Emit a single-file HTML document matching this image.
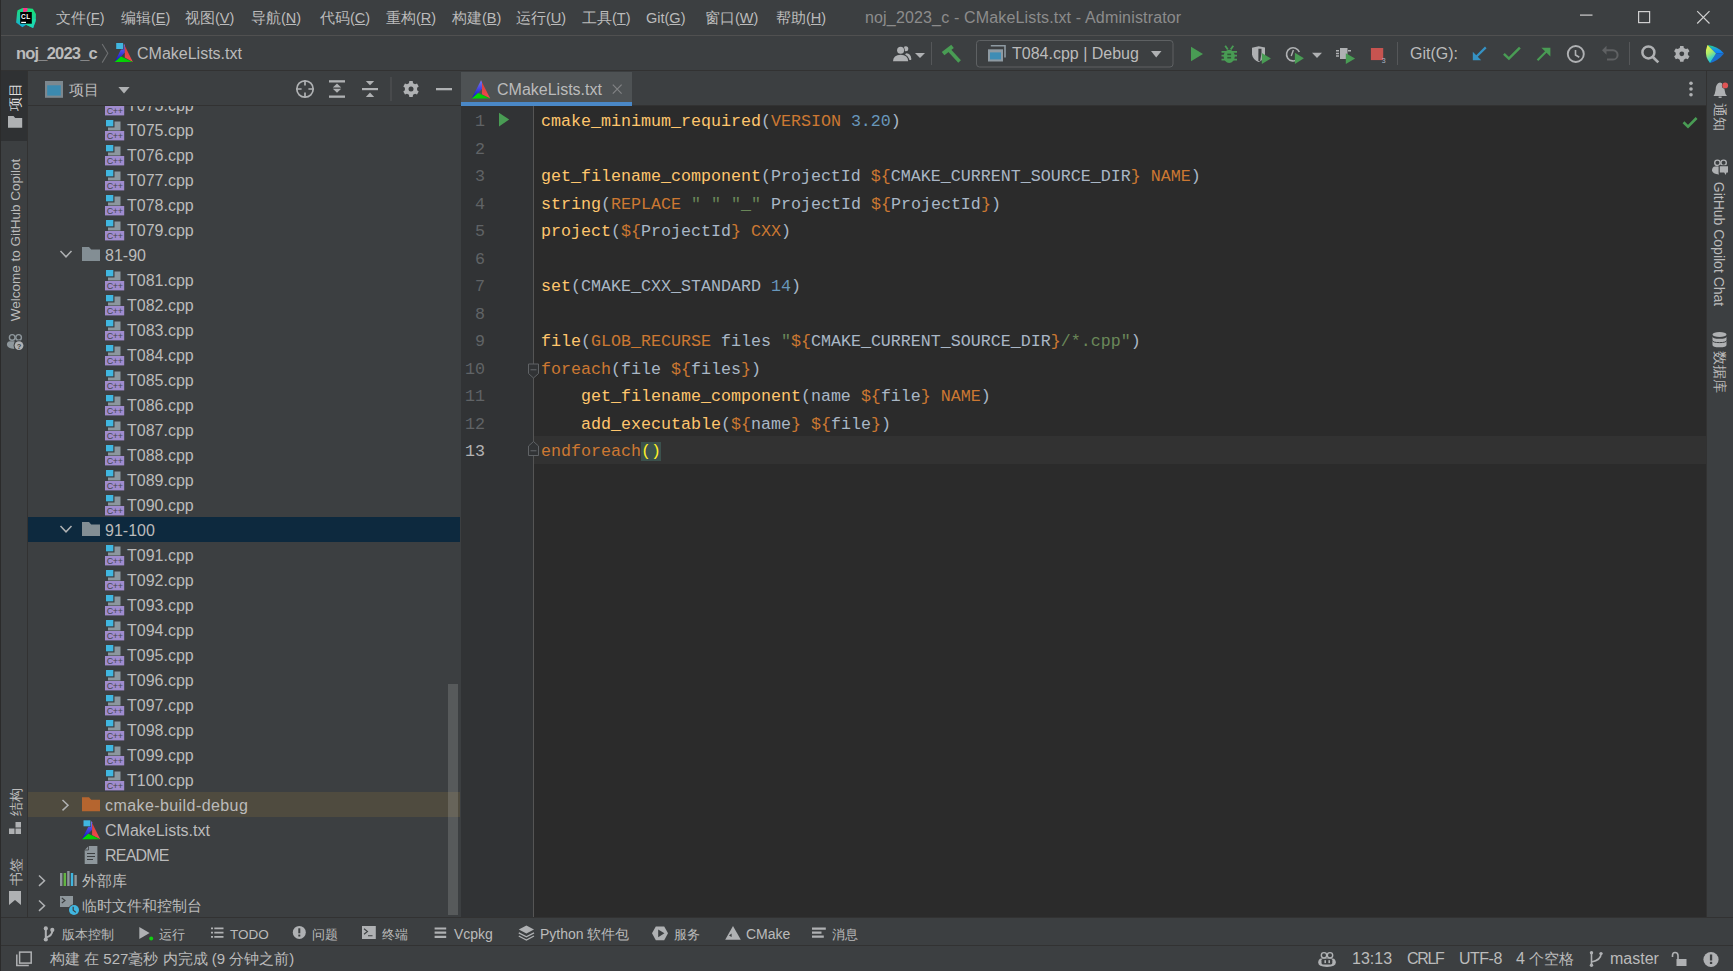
<!DOCTYPE html><html><head><meta charset="utf-8"><style>
*{margin:0;padding:0;box-sizing:border-box}
html,body{width:1733px;height:971px;overflow:hidden;background:#3c3f41}
body{font-family:"Liberation Sans",sans-serif;color:#bbbbbb;position:relative}
.a{position:absolute}
.t{position:absolute;white-space:nowrap;line-height:1}
svg.i{position:absolute;overflow:visible}
.menu{font-size:14.5px;color:#bbbbbb;top:11px}
.rt{position:absolute;font-size:16px;line-height:1;color:#bbbbbb;white-space:nowrap}
.cj{font-size:15px}
.ln{position:absolute;font-family:"Liberation Mono",monospace;font-size:16.667px;color:#606366;text-align:right;width:40px;left:445px;line-height:27.5px;height:27.5px}
.cl{position:absolute;left:541px;font-family:"Liberation Mono",monospace;font-size:16.667px;line-height:27.5px;height:27.5px;white-space:pre;color:#a9b7c6}
.y{color:#ffc66d}.o{color:#cc7832}.n{color:#6897bb}.s{color:#6a8759}
.bt{position:absolute;white-space:nowrap;line-height:1;font-size:14px;top:927px;color:#bbbbbb}
.st{position:absolute;white-space:nowrap;line-height:1;font-size:15px;top:951px;color:#bbbbbb}
</style></head><body><div class="a" style="left:0px;top:0px;width:1733px;height:35px;background:#3c3f41;"></div>
<div class="a" style="left:0px;top:35px;width:1733px;height:1px;background:#505050;"></div>
<div class="a" style="left:0px;top:36px;width:1733px;height:34px;background:#3c3f41;"></div>
<div class="a" style="left:0px;top:70px;width:1733px;height:1px;background:#323232;"></div>
<div class="a" style="left:0px;top:71px;width:27px;height:846px;background:#3c3f41;"></div>
<div class="a" style="left:27px;top:71px;width:1px;height:846px;background:#323232;"></div>
<div class="a" style="left:1px;top:71px;width:26px;height:70px;background:#2f3133;"></div>
<div class="a" style="left:28px;top:71px;width:433px;height:846px;background:#3c3f41;"></div>
<div class="a" style="left:461px;top:71px;width:1245px;height:34px;background:#3c3f41;"></div>
<div class="a" style="left:461px;top:105px;width:1245px;height:1px;background:#323232;"></div>
<div class="a" style="left:461px;top:106px;width:72px;height:811px;background:#313335;"></div>
<div class="a" style="left:533px;top:106px;width:1px;height:811px;background:#555555;"></div>
<div class="a" style="left:534px;top:106px;width:1172px;height:811px;background:#2b2b2b;"></div>
<div class="a" style="left:1706px;top:71px;width:1px;height:846px;background:#323232;"></div>
<div class="a" style="left:1707px;top:71px;width:26px;height:846px;background:#3c3f41;"></div>
<div class="a" style="left:0px;top:917px;width:1733px;height:1px;background:#323232;"></div>
<div class="a" style="left:0px;top:918px;width:1733px;height:27px;background:#3c3f41;"></div>
<div class="a" style="left:0px;top:945px;width:1733px;height:1px;background:#323232;"></div>
<div class="a" style="left:0px;top:946px;width:1733px;height:25px;background:#3c3f41;"></div>
<div class="a" style="left:0px;top:0px;width:1px;height:971px;background:#2b2b2b;"></div>
<div class="t menu" style="left:56px">文件(<u>F</u>)</div>
<div class="t menu" style="left:121px">编辑(<u>E</u>)</div>
<div class="t menu" style="left:185px">视图(<u>V</u>)</div>
<div class="t menu" style="left:251px">导航(<u>N</u>)</div>
<div class="t menu" style="left:320px">代码(<u>C</u>)</div>
<div class="t menu" style="left:386px">重构(<u>R</u>)</div>
<div class="t menu" style="left:452px">构建(<u>B</u>)</div>
<div class="t menu" style="left:516px">运行(<u>U</u>)</div>
<div class="t menu" style="left:582px">工具(<u>T</u>)</div>
<div class="t menu" style="left:646px">Git(<u>G</u>)</div>
<div class="t menu" style="left:705px">窗口(<u>W</u>)</div>
<div class="t menu" style="left:776px">帮助(<u>H</u>)</div>
<div class="t" style="left:865px;top:10px;font-size:16px;color:#8c8c8c;letter-spacing:0.16px">noj_2023_c - CMakeLists.txt - Administrator</div>
<div class="t" style="left:16px;top:45px;font-size:16.5px;color:#bbbbbb;font-weight:bold;letter-spacing:-0.8px">noj_2023_c</div>
<div class="t" style="left:137px;top:46px;font-size:16px;color:#bbbbbb;">CMakeLists.txt</div>
<div class="t" style="left:1012px;top:46px;font-size:16px;color:#bbbbbb;">T084.cpp | Debug</div>
<div class="t" style="left:1410px;top:46px;font-size:16px;color:#bbbbbb;">Git(G):</div>
<div class="a" style="left:28px;top:105px;width:433px;height:1px;background:#323232;"></div>
<div class="t" style="left:69px;top:82px;font-size:15px;color:#bbbbbb;">项目</div>
<div class="a" style="left:461px;top:72px;width:171px;height:30px;background:#4e5254;"></div>
<div class="a" style="left:461px;top:102px;width:171px;height:4px;background:#4a88c7;"></div>
<div class="t" style="left:497px;top:82px;font-size:16px;color:#bbbbbb;">CMakeLists.txt</div>
<div class="a" style="left:28px;top:517px;width:432px;height:25px;background:#0d293e;"></div>
<div class="a" style="left:28px;top:792px;width:432px;height:25px;background:#4f4b3f;"></div>
<div class="a" style="left:28px;top:106px;width:433px;height:811px;overflow:hidden">
<div class="rt" style="left:99px;top:-8px;font-size:16px;color:#bbbbbb;">T073.cpp</div>
<div class="rt" style="left:99px;top:17px;font-size:16px;color:#bbbbbb;">T075.cpp</div>
<div class="rt" style="left:99px;top:42px;font-size:16px;color:#bbbbbb;">T076.cpp</div>
<div class="rt" style="left:99px;top:67px;font-size:16px;color:#bbbbbb;">T077.cpp</div>
<div class="rt" style="left:99px;top:92px;font-size:16px;color:#bbbbbb;">T078.cpp</div>
<div class="rt" style="left:99px;top:117px;font-size:16px;color:#bbbbbb;">T079.cpp</div>
<div class="rt" style="left:77px;top:142px;font-size:16px;color:#bbbbbb;">81-90</div>
<div class="rt" style="left:99px;top:167px;font-size:16px;color:#bbbbbb;">T081.cpp</div>
<div class="rt" style="left:99px;top:192px;font-size:16px;color:#bbbbbb;">T082.cpp</div>
<div class="rt" style="left:99px;top:217px;font-size:16px;color:#bbbbbb;">T083.cpp</div>
<div class="rt" style="left:99px;top:242px;font-size:16px;color:#bbbbbb;">T084.cpp</div>
<div class="rt" style="left:99px;top:267px;font-size:16px;color:#bbbbbb;">T085.cpp</div>
<div class="rt" style="left:99px;top:292px;font-size:16px;color:#bbbbbb;">T086.cpp</div>
<div class="rt" style="left:99px;top:317px;font-size:16px;color:#bbbbbb;">T087.cpp</div>
<div class="rt" style="left:99px;top:342px;font-size:16px;color:#bbbbbb;">T088.cpp</div>
<div class="rt" style="left:99px;top:367px;font-size:16px;color:#bbbbbb;">T089.cpp</div>
<div class="rt" style="left:99px;top:392px;font-size:16px;color:#bbbbbb;">T090.cpp</div>
<div class="rt" style="left:77px;top:417px;font-size:16px;color:#bbbbbb;">91-100</div>
<div class="rt" style="left:99px;top:442px;font-size:16px;color:#bbbbbb;">T091.cpp</div>
<div class="rt" style="left:99px;top:467px;font-size:16px;color:#bbbbbb;">T092.cpp</div>
<div class="rt" style="left:99px;top:492px;font-size:16px;color:#bbbbbb;">T093.cpp</div>
<div class="rt" style="left:99px;top:517px;font-size:16px;color:#bbbbbb;">T094.cpp</div>
<div class="rt" style="left:99px;top:542px;font-size:16px;color:#bbbbbb;">T095.cpp</div>
<div class="rt" style="left:99px;top:567px;font-size:16px;color:#bbbbbb;">T096.cpp</div>
<div class="rt" style="left:99px;top:592px;font-size:16px;color:#bbbbbb;">T097.cpp</div>
<div class="rt" style="left:99px;top:617px;font-size:16px;color:#bbbbbb;">T098.cpp</div>
<div class="rt" style="left:99px;top:642px;font-size:16px;color:#bbbbbb;">T099.cpp</div>
<div class="rt" style="left:99px;top:667px;font-size:16px;color:#bbbbbb;">T100.cpp</div>
</div>
<div class="rt" style="left:105px;top:798px;font-size:16px;color:#bbbbbb;letter-spacing:0.42px">cmake-build-debug</div>
<div class="rt" style="left:105px;top:823px;font-size:16px;color:#bbbbbb;">CMakeLists.txt</div>
<div class="rt" style="left:105px;top:848px;font-size:16px;color:#bbbbbb;letter-spacing:-0.8px">README</div>
<div class="rt" style="left:82px;top:873px;font-size:15px;color:#bbbbbb;">外部库</div>
<div class="rt" style="left:82px;top:898px;font-size:15px;color:#bbbbbb;">临时文件和控制台</div>
<div class="t" style="left:16px;top:97px;font-size:13.5px;color:#dddddd;transform:translate(-50%,-50%) rotate(-90deg);">项目</div>
<div class="t" style="left:16px;top:240px;font-size:13.5px;color:#bbbbbb;transform:translate(-50%,-50%) rotate(-90deg);">Welcome to GitHub Copilot</div>
<div class="t" style="left:16.5px;top:802px;font-size:13.5px;color:#bbbbbb;transform:translate(-50%,-50%) rotate(-90deg);">结构</div>
<div class="t" style="left:16.5px;top:872px;font-size:13.5px;color:#bbbbbb;transform:translate(-50%,-50%) rotate(-90deg);">书签</div>
<div class="t" style="left:1718.5px;top:117px;font-size:13.5px;color:#bbbbbb;transform:translate(-50%,-50%) rotate(90deg);">通知</div>
<div class="t" style="left:1719px;top:243.5px;font-size:14px;color:#bbbbbb;transform:translate(-50%,-50%) rotate(90deg);">GitHub Copilot Chat</div>
<div class="t" style="left:1719px;top:372px;font-size:13.5px;color:#bbbbbb;transform:translate(-50%,-50%) rotate(90deg);">数据库</div>
<div class="a" style="left:534px;top:436px;width:1172px;height:28px;background:#323232;"></div>
<div class="ln" style="top:108.0px;color:#606366">1</div>
<div class="cl" style="top:108.0px"><span class="y">cmake_minimum_required</span>(<span class="o">VERSION</span> <span class="n">3.20</span>)</div>
<div class="ln" style="top:135.5px;color:#606366">2</div>
<div class="cl" style="top:135.5px"></div>
<div class="ln" style="top:163.0px;color:#606366">3</div>
<div class="cl" style="top:163.0px"><span class="y">get_filename_component</span>(ProjectId <span class="o">${</span>CMAKE_CURRENT_SOURCE_DIR<span class="o">}</span> <span class="o">NAME</span>)</div>
<div class="ln" style="top:190.5px;color:#606366">4</div>
<div class="cl" style="top:190.5px"><span class="y">string</span>(<span class="o">REPLACE</span> <span class="s">" "</span> <span class="s">"_"</span> ProjectId <span class="o">${</span>ProjectId<span class="o">}</span>)</div>
<div class="ln" style="top:218.0px;color:#606366">5</div>
<div class="cl" style="top:218.0px"><span class="y">project</span>(<span class="o">${</span>ProjectId<span class="o">}</span> <span class="o">CXX</span>)</div>
<div class="ln" style="top:245.5px;color:#606366">6</div>
<div class="cl" style="top:245.5px"></div>
<div class="ln" style="top:273.0px;color:#606366">7</div>
<div class="cl" style="top:273.0px"><span class="y">set</span>(CMAKE_CXX_STANDARD <span class="n">14</span>)</div>
<div class="ln" style="top:300.5px;color:#606366">8</div>
<div class="cl" style="top:300.5px"></div>
<div class="ln" style="top:328.0px;color:#606366">9</div>
<div class="cl" style="top:328.0px"><span class="y">file</span>(<span class="o">GLOB_RECURSE</span> files <span class="s">"</span><span class="o">${</span>CMAKE_CURRENT_SOURCE_DIR<span class="o">}</span><span class="s">/*.cpp"</span>)</div>
<div class="ln" style="top:355.5px;color:#606366">10</div>
<div class="cl" style="top:355.5px"><span class="o">foreach</span>(file <span class="o">${</span>files<span class="o">}</span>)</div>
<div class="ln" style="top:383.0px;color:#606366">11</div>
<div class="cl" style="top:383.0px">    <span class="y">get_filename_component</span>(name <span class="o">${</span>file<span class="o">}</span> <span class="o">NAME</span>)</div>
<div class="ln" style="top:410.5px;color:#606366">12</div>
<div class="cl" style="top:410.5px">    <span class="y">add_executable</span>(<span class="o">${</span>name<span class="o">}</span> <span class="o">${</span>file<span class="o">}</span>)</div>
<div class="ln" style="top:438.0px;color:#b4b4b4">13</div>
<div class="cl" style="top:438.0px"><span class="o">endforeach</span><span style="color:#ffef28;background:#3b514d">()</span></div>
<div class="bt" style="left:62px"><span style="font-size:13px">版本控制</span></div>
<div class="bt" style="left:159px"><span style="font-size:13px">运行</span></div>
<div class="bt" style="left:230px"><span style="font-size:13.5px">TODO</span></div>
<div class="bt" style="left:312px"><span style="font-size:13px">问题</span></div>
<div class="bt" style="left:382px"><span style="font-size:13px">终端</span></div>
<div class="bt" style="left:454px">Vcpkg</div>
<div class="bt" style="left:540px">Python <span style="font-size:13.5px">软件包</span></div>
<div class="bt" style="left:674px"><span style="font-size:13px">服务</span></div>
<div class="bt" style="left:746px">CMake</div>
<div class="bt" style="left:832px"><span style="font-size:13.3px">消息</span></div>
<div class="st" style="left:50px">构建 在 527毫秒 内完成 (9 分钟之前)</div>
<div class="st" style="left:1352px;font-size:16px;top:950.5px">13:13</div>
<div class="st" style="left:1407px;font-size:16px;top:950.5px"><span style="letter-spacing:-1.3px">CRLF</span></div>
<div class="st" style="left:1459px;font-size:16px;top:950.5px"><span style="letter-spacing:-0.5px">UTF-8</span></div>
<div class="st" style="left:1516px;font-size:16px;top:950.5px">4 <span style="font-size:15px">个空格</span></div>
<div class="st" style="left:1610px;font-size:16px;top:950.5px">master</div>
<div class="a" style="left:448px;top:684px;width:10px;height:231px;background:rgba(255,255,255,0.14);"></div><svg class="i" style="left:0;top:0" width="1733" height="971" viewBox="0 0 1733 971">
<defs>
<linearGradient id="cmB" x1="0" y1="0" x2="0" y2="1"><stop offset="0" stop-color="#7a7af0"/><stop offset="1" stop-color="#0a0ac8"/></linearGradient>
<linearGradient id="cmR" x1="0" y1="0" x2="0" y2="1"><stop offset="0" stop-color="#d03a3a"/><stop offset="1" stop-color="#f44c4c"/></linearGradient>
<linearGradient id="cmG" x1="0" y1="0" x2="1" y2="0"><stop offset="0" stop-color="#00e000"/><stop offset="1" stop-color="#08c008"/></linearGradient>
<linearGradient id="clg" x1="0.2" y1="0" x2="0" y2="1"><stop offset="0" stop-color="#16e07a"/><stop offset="0.55" stop-color="#1fc8a8"/><stop offset="1" stop-color="#0aa0ec"/></linearGradient><linearGradient id="clg2" x1="0" y1="0" x2="1" y2="1"><stop offset="0" stop-color="#14e882"/><stop offset="1" stop-color="#20d0c8"/></linearGradient>
<linearGradient id="lgY" x1="0" y1="0" x2="0.4" y2="1"><stop offset="0" stop-color="#fcf84a"/><stop offset="0.5" stop-color="#a7eb6c"/><stop offset="1" stop-color="#07c3f2"/></linearGradient>
<linearGradient id="lgB" x1="0" y1="0" x2="0" y2="1"><stop offset="0" stop-color="#21d789"/><stop offset="0.5" stop-color="#1a9ae0"/><stop offset="1" stop-color="#087cfa"/></linearGradient>
</defs>
<polygon points="17.6,10.2 22.7,8 27.3,8.3 32.8,8.8 35.9,14.1 35.8,21.3 33.1,27.9 26.1,24.8 22.4,27.3 16.1,22.4 17.1,12.6" fill="url(#clg)"/>
<polygon points="33.1,27.9 26.1,24.8 27,20 35.8,19" fill="url(#clg2)"/>
<polygon points="23,8.1 27.4,8.1 27.6,11 24.5,12.2 23.2,12" fill="#fc318c"/>
<rect x="20.2" y="12" width="11.6" height="11.7" fill="#000"/>
<text x="21.1" y="18.5" font-family="Liberation Sans" font-weight="bold" font-size="6.6" fill="#fff" letter-spacing="0.4">CL</text>
<rect x="21.2" y="21.8" width="4.8" height="1.2" fill="#fff"/>
<rect x="1580" y="14.5" width="12.5" height="1.2" fill="#cfcfcf"/>
<rect x="1638.6" y="11.6" width="11" height="11" fill="none" stroke="#cfcfcf" stroke-width="1.2"/>
<path d="M1697.2,11.2 L1709.5,23.5 M1709.5,11.2 L1697.2,23.5" stroke="#cfcfcf" stroke-width="1.2"/>
<path d="M102.2,44 L107.8,53.2 L102.2,62.6" fill="none" stroke="#6e7072" stroke-width="1.1"/>
<polygon points="123.80,43.70 124.80,45.00 124.80,52.40 121.00,56.40 114.70,61.90" fill="url(#cmB)"/><polygon points="123.80,43.70 132.90,61.90 124.80,57.60 124.80,45.00" fill="url(#cmR)"/><polygon points="114.70,61.90 121.00,56.40 132.90,61.90" fill="url(#cmG)"/><rect x="115.70" y="42.50" width="8.00" height="7.00" fill="#3c3f41"/><rect x="116.20" y="43.00" width="6.90" height="6.00" fill="#40b6e0"/>
<circle cx="905.8" cy="48.8" r="2.5" fill="#afb1b3"/><path d="M904,60 Q904.5,53.6 906.5,53.2 Q910.8,53.8 911.2,58.2 L911.2,60 Z" fill="#afb1b3"/>
<circle cx="900.6" cy="50.2" r="4.3" fill="#3c3f41"/><path d="M891.8,62.2 Q892,54 900.6,53.4 Q909.5,54 909.6,62.2 Z" fill="#3c3f41"/>
<circle cx="900.6" cy="50.2" r="3.5" fill="#afb1b3"/><path d="M893,61.2 Q893.2,55 900.6,54.7 Q908,55 908.2,61.2 Z" fill="#afb1b3"/>
<polygon points="915,53 925,53 920,58" fill="#afb1b3"/>
<rect x="931" y="42" width="1" height="23" fill="#555759"/>
<g transform="rotate(-38 947.8 50)"><rect x="941.8" y="47.9" width="12" height="4.2" fill="#499c54"/></g>
<line x1="949.5" y1="50.6" x2="959.6" y2="61.4" stroke="#499c54" stroke-width="3.6"/>
<rect x="976.5" y="40.5" width="196.5" height="26.5" rx="3" fill="none" stroke="#5e6163" stroke-width="1"/>
<path d="M990.8,45.8 H1005 V57.5" fill="none" stroke="#8e9aa2" stroke-width="1.6"/>
<rect x="988" y="49.3" width="15" height="12.2" fill="#8e9aa2"/><rect x="990" y="52.4" width="11" height="7" fill="#3e8db5"/>
<polygon points="1151,51 1161.5,51 1156.2,57.5" fill="#afb1b3"/>
<polygon points="1191,46.8 1191,61.3 1203,54" fill="#499c54"/>
<ellipse cx="1229.2" cy="56.3" rx="5.6" ry="6.6" fill="#499c54"/>
<path d="M1221.5,51.8 H1237 M1221.5,55.6 H1237 M1221.5,59.6 H1237" stroke="#499c54" stroke-width="1.8"/>
<path d="M1225.2,45.8 L1227.8,49.6 M1233.3,45.8 L1230.7,49.6" stroke="#499c54" stroke-width="1.8"/>
<rect x="1227.3" y="53.6" width="3.8" height="1.6" fill="#2f5a35"/><rect x="1227.3" y="56.9" width="3.8" height="1.6" fill="#2f5a35"/>
<path d="M1252,47.8 L1258.6,46.2 L1265,47.6 V54.5 Q1264.2,60 1258.6,62 Q1253,60 1252,54.5 Z" fill="#afb1b3"/>
<path d="M1258.4,48.8 H1261.5 V53 L1260.2,61 H1258.4 Z" fill="#3c3f41"/>
<polygon points="1261.8,53 1261.8,63.9 1270.9,58.4" fill="#499c54"/>
<path d="M1297.6,59.2 A6.6,6.6 0 1 1 1299.3,52" fill="none" stroke="#afb1b3" stroke-width="1.6"/>
<path d="M1293.4,50 L1291.2,56" stroke="#afb1b3" stroke-width="1.4"/>
<polygon points="1294.9,52.8 1294.9,63.9 1303.9,58.3" fill="#499c54"/>
<polygon points="1312,52.8 1322,52.8 1317,58" fill="#afb1b3"/>
<rect x="1340" y="48" width="7.5" height="11" fill="#afb1b3"/>
<path d="M1336,50.8 H1339 M1336,53.5 H1339 M1336,56 H1339 M1348,50.8 H1351" stroke="#afb1b3" stroke-width="1.6"/>
<polygon points="1345.8,53.2 1345.8,63.9 1355.1,58.5" fill="#499c54"/>
<rect x="1370.9" y="48" width="12.3" height="12.1" fill="#c75450"/>
<text x="1381.8" y="63.2" font-family="Liberation Sans" font-size="7" fill="#a9b7c6">3</text>
<rect x="1397" y="42" width="1" height="23" fill="#555759"/>
<path d="M1485.8,47.4 L1475.5,57.5" stroke="#3592c4" stroke-width="2.2"/>
<polygon points="1472.8,51.8 1472.8,60.2 1481.2,60.2" fill="#3592c4"/>
<path d="M1503.9,53.8 L1508.9,58.6 L1519.9,47.6" fill="none" stroke="#499c54" stroke-width="2.5"/>
<path d="M1537.5,60.3 L1547,50.8" stroke="#499c54" stroke-width="2.2"/>
<polygon points="1541.4,47.8 1550.4,47.8 1550.4,56.4" fill="#499c54"/>
<circle cx="1575.8" cy="54" r="8" fill="none" stroke="#afb1b3" stroke-width="1.9"/>
<path d="M1575.5,50 V55 L1579.3,57.2" fill="none" stroke="#afb1b3" stroke-width="1.6"/>
<polygon points="1602,50.3 1606.5,45.8 1606.5,54.8" fill="#5f6163"/>
<path d="M1605.5,50.3 H1613 A4.6,4.6 0 0 1 1613,59.5 H1607" fill="none" stroke="#5f6163" stroke-width="2"/>
<rect x="1629" y="42" width="1" height="23" fill="#555759"/>
<circle cx="1648.4" cy="52.4" r="6" fill="none" stroke="#afb1b3" stroke-width="2.5"/>
<path d="M1652.6,56.8 L1658.3,62.4" stroke="#afb1b3" stroke-width="2.7"/>
<path d="M1680.12,45.88 L1683.48,45.88 L1683.84,47.94 L1685.85,49.11 L1687.82,48.38 L1689.50,51.30 L1687.89,52.64 L1687.89,54.96 L1689.50,56.30 L1687.82,59.22 L1685.85,58.49 L1683.84,59.66 L1683.48,61.72 L1680.12,61.72 L1679.76,59.66 L1677.75,58.49 L1675.78,59.22 L1674.10,56.30 L1675.71,54.96 L1675.71,52.64 L1674.10,51.30 L1675.78,48.38 L1677.75,49.11 L1679.76,47.94Z" fill="#afb1b3"/><circle cx="1681.8" cy="53.8" r="2.4" fill="#3c3f41"/>
<path d="M1707.5,45 Q1718,46 1724,53.5 L1716,53.5 Z" fill="url(#lgB)"/>
<path d="M1716,53.5 H1724 Q1718,61 1710,63 Z" fill="#1a6fd0"/>
<path d="M1707.5,45 L1716,53.5 L1710,63 Q1705,57 1706,50 Z" fill="url(#lgY)"/>
<polygon points="480.99,80.21 482.00,81.52 482.00,88.99 478.16,93.03 471.80,98.59" fill="url(#cmB)"/><polygon points="480.99,80.21 490.18,98.59 482.00,94.25 482.00,81.52" fill="url(#cmR)"/><polygon points="471.80,98.59 478.16,93.03 490.18,98.59" fill="url(#cmG)"/>
<path d="M612.8,84.6 L621.6,93.6 M621.6,84.6 L612.8,93.6" stroke="#808284" stroke-width="1.2"/>
<rect x="45" y="81" width="18" height="16.8" fill="#7d888f"/><rect x="47.2" y="85.3" width="13.6" height="10.3" fill="#3b8ab0"/>
<polygon points="118.4,87 129.6,87 124,93.5" fill="#afb1b3"/>
<circle cx="305" cy="89" r="8.2" fill="none" stroke="#afb1b3" stroke-width="1.7"/>
<path d="M305,80.5 V85.6 M305,92.4 V97.5 M296.5,89 H301.6 M308.4,89 H313.5" stroke="#afb1b3" stroke-width="1.7"/>
<rect x="329" y="80.2" width="16" height="2.3" fill="#afb1b3"/><rect x="329" y="95.5" width="16" height="2.3" fill="#afb1b3"/>
<polygon points="332.8,87.6 341.2,87.6 337,83.6" fill="#afb1b3"/><polygon points="332.8,88.8 341.2,88.8 337,92.8" fill="#afb1b3"/>
<polygon points="365.8,81 374.2,81 370,85.2" fill="#afb1b3"/><rect x="362" y="88" width="16" height="2.2" fill="#afb1b3"/><polygon points="365.8,97 374.2,97 370,92.6" fill="#afb1b3"/>
<rect x="390.5" y="77" width="1" height="24" fill="#555759"/>
<path d="M409.32,81.08 L412.68,81.08 L413.04,83.14 L415.05,84.31 L417.02,83.58 L418.70,86.50 L417.09,87.84 L417.09,90.16 L418.70,91.50 L417.02,94.42 L415.05,93.69 L413.04,94.86 L412.68,96.92 L409.32,96.92 L408.96,94.86 L406.95,93.69 L404.98,94.42 L403.30,91.50 L404.91,90.16 L404.91,87.84 L403.30,86.50 L404.98,83.58 L406.95,84.31 L408.96,83.14Z" fill="#afb1b3"/><circle cx="411" cy="89" r="2.5" fill="#3c3f41"/>
<rect x="436" y="88" width="16" height="2.3" fill="#afb1b3"/>
<clipPath id="trc"><rect x="28" y="106" width="433" height="811"/></clipPath><g clip-path="url(#trc)">
<rect x="108" y="96.5" width="12.5" height="9" fill="#9aa7b0" opacity="0.85"/><rect x="105.5" y="94.5" width="9" height="8" fill="#3c3f41"/><rect x="106" y="95" width="7.3" height="6.3" fill="#40b6e0"/><rect x="105" y="106" width="19.2" height="9.4" fill="#a08ccf" /><text x="114.6" y="114" font-family="Liberation Sans" font-size="9" fill="#45474a" text-anchor="middle" letter-spacing="-0.4">C++</text>
<rect x="108" y="121.5" width="12.5" height="9" fill="#9aa7b0" opacity="0.85"/><rect x="105.5" y="119.5" width="9" height="8" fill="#3c3f41"/><rect x="106" y="120" width="7.3" height="6.3" fill="#40b6e0"/><rect x="105" y="131" width="19.2" height="9.4" fill="#a08ccf" /><text x="114.6" y="139" font-family="Liberation Sans" font-size="9" fill="#45474a" text-anchor="middle" letter-spacing="-0.4">C++</text>
<rect x="108" y="146.5" width="12.5" height="9" fill="#9aa7b0" opacity="0.85"/><rect x="105.5" y="144.5" width="9" height="8" fill="#3c3f41"/><rect x="106" y="145" width="7.3" height="6.3" fill="#40b6e0"/><rect x="105" y="156" width="19.2" height="9.4" fill="#a08ccf" /><text x="114.6" y="164" font-family="Liberation Sans" font-size="9" fill="#45474a" text-anchor="middle" letter-spacing="-0.4">C++</text>
<rect x="108" y="171.5" width="12.5" height="9" fill="#9aa7b0" opacity="0.85"/><rect x="105.5" y="169.5" width="9" height="8" fill="#3c3f41"/><rect x="106" y="170" width="7.3" height="6.3" fill="#40b6e0"/><rect x="105" y="181" width="19.2" height="9.4" fill="#a08ccf" /><text x="114.6" y="189" font-family="Liberation Sans" font-size="9" fill="#45474a" text-anchor="middle" letter-spacing="-0.4">C++</text>
<rect x="108" y="196.5" width="12.5" height="9" fill="#9aa7b0" opacity="0.85"/><rect x="105.5" y="194.5" width="9" height="8" fill="#3c3f41"/><rect x="106" y="195" width="7.3" height="6.3" fill="#40b6e0"/><rect x="105" y="206" width="19.2" height="9.4" fill="#a08ccf" /><text x="114.6" y="214" font-family="Liberation Sans" font-size="9" fill="#45474a" text-anchor="middle" letter-spacing="-0.4">C++</text>
<rect x="108" y="221.5" width="12.5" height="9" fill="#9aa7b0" opacity="0.85"/><rect x="105.5" y="219.5" width="9" height="8" fill="#3c3f41"/><rect x="106" y="220" width="7.3" height="6.3" fill="#40b6e0"/><rect x="105" y="231" width="19.2" height="9.4" fill="#a08ccf" /><text x="114.6" y="239" font-family="Liberation Sans" font-size="9" fill="#45474a" text-anchor="middle" letter-spacing="-0.4">C++</text>
<rect x="108" y="271.5" width="12.5" height="9" fill="#9aa7b0" opacity="0.85"/><rect x="105.5" y="269.5" width="9" height="8" fill="#3c3f41"/><rect x="106" y="270" width="7.3" height="6.3" fill="#40b6e0"/><rect x="105" y="281" width="19.2" height="9.4" fill="#a08ccf" /><text x="114.6" y="289" font-family="Liberation Sans" font-size="9" fill="#45474a" text-anchor="middle" letter-spacing="-0.4">C++</text>
<rect x="108" y="296.5" width="12.5" height="9" fill="#9aa7b0" opacity="0.85"/><rect x="105.5" y="294.5" width="9" height="8" fill="#3c3f41"/><rect x="106" y="295" width="7.3" height="6.3" fill="#40b6e0"/><rect x="105" y="306" width="19.2" height="9.4" fill="#a08ccf" /><text x="114.6" y="314" font-family="Liberation Sans" font-size="9" fill="#45474a" text-anchor="middle" letter-spacing="-0.4">C++</text>
<rect x="108" y="321.5" width="12.5" height="9" fill="#9aa7b0" opacity="0.85"/><rect x="105.5" y="319.5" width="9" height="8" fill="#3c3f41"/><rect x="106" y="320" width="7.3" height="6.3" fill="#40b6e0"/><rect x="105" y="331" width="19.2" height="9.4" fill="#a08ccf" /><text x="114.6" y="339" font-family="Liberation Sans" font-size="9" fill="#45474a" text-anchor="middle" letter-spacing="-0.4">C++</text>
<rect x="108" y="346.5" width="12.5" height="9" fill="#9aa7b0" opacity="0.85"/><rect x="105.5" y="344.5" width="9" height="8" fill="#3c3f41"/><rect x="106" y="345" width="7.3" height="6.3" fill="#40b6e0"/><rect x="105" y="356" width="19.2" height="9.4" fill="#a08ccf" /><text x="114.6" y="364" font-family="Liberation Sans" font-size="9" fill="#45474a" text-anchor="middle" letter-spacing="-0.4">C++</text>
<rect x="108" y="371.5" width="12.5" height="9" fill="#9aa7b0" opacity="0.85"/><rect x="105.5" y="369.5" width="9" height="8" fill="#3c3f41"/><rect x="106" y="370" width="7.3" height="6.3" fill="#40b6e0"/><rect x="105" y="381" width="19.2" height="9.4" fill="#a08ccf" /><text x="114.6" y="389" font-family="Liberation Sans" font-size="9" fill="#45474a" text-anchor="middle" letter-spacing="-0.4">C++</text>
<rect x="108" y="396.5" width="12.5" height="9" fill="#9aa7b0" opacity="0.85"/><rect x="105.5" y="394.5" width="9" height="8" fill="#3c3f41"/><rect x="106" y="395" width="7.3" height="6.3" fill="#40b6e0"/><rect x="105" y="406" width="19.2" height="9.4" fill="#a08ccf" /><text x="114.6" y="414" font-family="Liberation Sans" font-size="9" fill="#45474a" text-anchor="middle" letter-spacing="-0.4">C++</text>
<rect x="108" y="421.5" width="12.5" height="9" fill="#9aa7b0" opacity="0.85"/><rect x="105.5" y="419.5" width="9" height="8" fill="#3c3f41"/><rect x="106" y="420" width="7.3" height="6.3" fill="#40b6e0"/><rect x="105" y="431" width="19.2" height="9.4" fill="#a08ccf" /><text x="114.6" y="439" font-family="Liberation Sans" font-size="9" fill="#45474a" text-anchor="middle" letter-spacing="-0.4">C++</text>
<rect x="108" y="446.5" width="12.5" height="9" fill="#9aa7b0" opacity="0.85"/><rect x="105.5" y="444.5" width="9" height="8" fill="#3c3f41"/><rect x="106" y="445" width="7.3" height="6.3" fill="#40b6e0"/><rect x="105" y="456" width="19.2" height="9.4" fill="#a08ccf" /><text x="114.6" y="464" font-family="Liberation Sans" font-size="9" fill="#45474a" text-anchor="middle" letter-spacing="-0.4">C++</text>
<rect x="108" y="471.5" width="12.5" height="9" fill="#9aa7b0" opacity="0.85"/><rect x="105.5" y="469.5" width="9" height="8" fill="#3c3f41"/><rect x="106" y="470" width="7.3" height="6.3" fill="#40b6e0"/><rect x="105" y="481" width="19.2" height="9.4" fill="#a08ccf" /><text x="114.6" y="489" font-family="Liberation Sans" font-size="9" fill="#45474a" text-anchor="middle" letter-spacing="-0.4">C++</text>
<rect x="108" y="496.5" width="12.5" height="9" fill="#9aa7b0" opacity="0.85"/><rect x="105.5" y="494.5" width="9" height="8" fill="#3c3f41"/><rect x="106" y="495" width="7.3" height="6.3" fill="#40b6e0"/><rect x="105" y="506" width="19.2" height="9.4" fill="#a08ccf" /><text x="114.6" y="514" font-family="Liberation Sans" font-size="9" fill="#45474a" text-anchor="middle" letter-spacing="-0.4">C++</text>
<rect x="108" y="546.5" width="12.5" height="9" fill="#9aa7b0" opacity="0.85"/><rect x="105.5" y="544.5" width="9" height="8" fill="#3c3f41"/><rect x="106" y="545" width="7.3" height="6.3" fill="#40b6e0"/><rect x="105" y="556" width="19.2" height="9.4" fill="#a08ccf" /><text x="114.6" y="564" font-family="Liberation Sans" font-size="9" fill="#45474a" text-anchor="middle" letter-spacing="-0.4">C++</text>
<rect x="108" y="571.5" width="12.5" height="9" fill="#9aa7b0" opacity="0.85"/><rect x="105.5" y="569.5" width="9" height="8" fill="#3c3f41"/><rect x="106" y="570" width="7.3" height="6.3" fill="#40b6e0"/><rect x="105" y="581" width="19.2" height="9.4" fill="#a08ccf" /><text x="114.6" y="589" font-family="Liberation Sans" font-size="9" fill="#45474a" text-anchor="middle" letter-spacing="-0.4">C++</text>
<rect x="108" y="596.5" width="12.5" height="9" fill="#9aa7b0" opacity="0.85"/><rect x="105.5" y="594.5" width="9" height="8" fill="#3c3f41"/><rect x="106" y="595" width="7.3" height="6.3" fill="#40b6e0"/><rect x="105" y="606" width="19.2" height="9.4" fill="#a08ccf" /><text x="114.6" y="614" font-family="Liberation Sans" font-size="9" fill="#45474a" text-anchor="middle" letter-spacing="-0.4">C++</text>
<rect x="108" y="621.5" width="12.5" height="9" fill="#9aa7b0" opacity="0.85"/><rect x="105.5" y="619.5" width="9" height="8" fill="#3c3f41"/><rect x="106" y="620" width="7.3" height="6.3" fill="#40b6e0"/><rect x="105" y="631" width="19.2" height="9.4" fill="#a08ccf" /><text x="114.6" y="639" font-family="Liberation Sans" font-size="9" fill="#45474a" text-anchor="middle" letter-spacing="-0.4">C++</text>
<rect x="108" y="646.5" width="12.5" height="9" fill="#9aa7b0" opacity="0.85"/><rect x="105.5" y="644.5" width="9" height="8" fill="#3c3f41"/><rect x="106" y="645" width="7.3" height="6.3" fill="#40b6e0"/><rect x="105" y="656" width="19.2" height="9.4" fill="#a08ccf" /><text x="114.6" y="664" font-family="Liberation Sans" font-size="9" fill="#45474a" text-anchor="middle" letter-spacing="-0.4">C++</text>
<rect x="108" y="671.5" width="12.5" height="9" fill="#9aa7b0" opacity="0.85"/><rect x="105.5" y="669.5" width="9" height="8" fill="#3c3f41"/><rect x="106" y="670" width="7.3" height="6.3" fill="#40b6e0"/><rect x="105" y="681" width="19.2" height="9.4" fill="#a08ccf" /><text x="114.6" y="689" font-family="Liberation Sans" font-size="9" fill="#45474a" text-anchor="middle" letter-spacing="-0.4">C++</text>
<rect x="108" y="696.5" width="12.5" height="9" fill="#9aa7b0" opacity="0.85"/><rect x="105.5" y="694.5" width="9" height="8" fill="#3c3f41"/><rect x="106" y="695" width="7.3" height="6.3" fill="#40b6e0"/><rect x="105" y="706" width="19.2" height="9.4" fill="#a08ccf" /><text x="114.6" y="714" font-family="Liberation Sans" font-size="9" fill="#45474a" text-anchor="middle" letter-spacing="-0.4">C++</text>
<rect x="108" y="721.5" width="12.5" height="9" fill="#9aa7b0" opacity="0.85"/><rect x="105.5" y="719.5" width="9" height="8" fill="#3c3f41"/><rect x="106" y="720" width="7.3" height="6.3" fill="#40b6e0"/><rect x="105" y="731" width="19.2" height="9.4" fill="#a08ccf" /><text x="114.6" y="739" font-family="Liberation Sans" font-size="9" fill="#45474a" text-anchor="middle" letter-spacing="-0.4">C++</text>
<rect x="108" y="746.5" width="12.5" height="9" fill="#9aa7b0" opacity="0.85"/><rect x="105.5" y="744.5" width="9" height="8" fill="#3c3f41"/><rect x="106" y="745" width="7.3" height="6.3" fill="#40b6e0"/><rect x="105" y="756" width="19.2" height="9.4" fill="#a08ccf" /><text x="114.6" y="764" font-family="Liberation Sans" font-size="9" fill="#45474a" text-anchor="middle" letter-spacing="-0.4">C++</text>
<rect x="108" y="771.5" width="12.5" height="9" fill="#9aa7b0" opacity="0.85"/><rect x="105.5" y="769.5" width="9" height="8" fill="#3c3f41"/><rect x="106" y="770" width="7.3" height="6.3" fill="#40b6e0"/><rect x="105" y="781" width="19.2" height="9.4" fill="#a08ccf" /><text x="114.6" y="789" font-family="Liberation Sans" font-size="9" fill="#45474a" text-anchor="middle" letter-spacing="-0.4">C++</text>
</g>
<path d="M60.5,251 L66.0,256.8 L71.5,251" fill="none" stroke="#afb1b3" stroke-width="1.5"/>
<path d="M82,247 H89 L91.2,249.5 H100 V261 H82 Z" fill="#838e94"/>
<path d="M60.5,526 L66.0,531.8 L71.5,526" fill="none" stroke="#afb1b3" stroke-width="1.5"/>
<path d="M82,522 H89 L91.2,524.5 H100 V536 H82 Z" fill="#838e94"/>
<path d="M62.5,800 L68.0,805.2 L62.5,810.4" fill="none" stroke="#afb1b3" stroke-width="1.5"/>
<path d="M82,797.2 H89 L91.2,799.7 H100 V811.2 H82 Z" fill="#b5652f"/>
<polygon points="91.10,821.00 92.10,822.30 92.10,829.70 88.30,833.70 82.00,839.20" fill="url(#cmB)"/><polygon points="91.10,821.00 100.20,839.20 92.10,834.90 92.10,822.30" fill="url(#cmR)"/><polygon points="82.00,839.20 88.30,833.70 100.20,839.20" fill="url(#cmG)"/><rect x="83.00" y="819.80" width="8.00" height="7.00" fill="#3c3f41"/><rect x="83.50" y="820.30" width="6.90" height="6.00" fill="#40b6e0"/>
<path d="M84.7,850 L88.5,846 H97.4 V864 H84.7 Z" fill="#8e979c"/>
<path d="M87,853.5 H95 M87,856.5 H95 M87,859.5 H93" stroke="#3c3f41" stroke-width="1.2"/>
<path d="M84.7,850 H88.5 V846" fill="none" stroke="#3c3f41" stroke-width="0.8"/>
<path d="M39,875.5 L44.5,880.7 L39,885.9" fill="none" stroke="#afb1b3" stroke-width="1.5"/>
<path d="M39,900.5 L44.5,905.7 L39,910.9" fill="none" stroke="#afb1b3" stroke-width="1.5"/>
<rect x="60" y="873" width="2.4" height="13" fill="#8e979c"/><rect x="63.6" y="873" width="2.4" height="13" fill="#62b543"/><rect x="67.2" y="871" width="2.4" height="15" fill="#8e979c"/><rect x="70.8" y="873" width="2.4" height="13" fill="#40b6e0"/><rect x="74.4" y="875" width="2.4" height="11" fill="#8e979c"/>
<rect x="60" y="896" width="13" height="11" fill="#8e979c"/><path d="M61.8,898 L65,900.5 L61.8,903" fill="none" stroke="#3c3f41" stroke-width="1.1"/>
<circle cx="74" cy="910" r="5.8" fill="#3c3f41"/><circle cx="74" cy="910" r="5" fill="#40b6e0"/><path d="M73.2,906.8 V910.2 L75.8,912.4" fill="none" stroke="#3c3f41" stroke-width="1.2"/>
<polygon points="499,112.8 499,126.4 509.2,119.6" fill="#499c54"/>
<path d="M528.5,364 H538.5 V373.5 L533.5,378 L528.5,373.5 Z" fill="#313335" stroke="#606366" stroke-width="1"/><rect x="530.5" y="369.2" width="6" height="1.1" fill="#606366"/>
<path d="M528.5,455.5 H538.5 V446 L533.5,441.5 L528.5,446 Z" fill="#313335" stroke="#606366" stroke-width="1"/><rect x="530.5" y="450.2" width="6" height="1.1" fill="#606366"/>
<path d="M1683.5,122.2 L1688,126.6 L1696.6,118" fill="none" stroke="#499c54" stroke-width="2.6"/>
<circle cx="1691" cy="83.3" r="1.8" fill="#afb1b3"/><circle cx="1691" cy="89" r="1.8" fill="#afb1b3"/><circle cx="1691" cy="94.8" r="1.8" fill="#afb1b3"/>
<path d="M1713.5,96 Q1715,94 1715.6,90 Q1715.6,83.5 1720,82.5 Q1724.5,83.5 1724.6,90 Q1725,94 1727,96 Z" fill="#afb1b3"/><rect x="1718.6" y="96.5" width="3" height="1.4" fill="#afb1b3"/>
<circle cx="1725.2" cy="85.4" r="3.3" fill="#3c3f41"/><circle cx="1725.2" cy="85.4" r="2.9" fill="#e05555"/>
<circle cx="1717.4" cy="162.8" r="2.7" fill="none" stroke="#afb1b3" stroke-width="1.4"/><circle cx="1723.6" cy="162.8" r="2.7" fill="none" stroke="#afb1b3" stroke-width="1.4"/>
<path d="M1712,170.5 Q1712,166.6 1715,166.4 H1719 V174.5 Q1712.5,173.8 1712,170.5 Z" fill="#afb1b3"/>
<rect x="1718.6" y="165.2" width="10.6" height="8.6" fill="#3c3f41"/>
<path d="M1719.8,166.3 H1728 V172.5 H1726.6 L1725.6,175 L1724.2,172.5 H1719.8 Z" fill="#afb1b3"/>
<ellipse cx="1719.5" cy="334.5" rx="7" ry="2.4" fill="#afb1b3"/><path d="M1712.5,336.5 V345 Q1712.5,347.3 1719.5,347.3 Q1726.5,347.3 1726.5,345 V336.5 Q1726.5,338.8 1719.5,338.8 Q1712.5,338.8 1712.5,336.5 Z" fill="#afb1b3"/>
<path d="M1712.5,340.5 Q1712.5,342.6 1719.5,342.6 Q1726.5,342.6 1726.5,340.5" fill="none" stroke="#3c3f41" stroke-width="1"/>
<path d="M8,116 H13.5 L15.2,118 H22.2 V127.7 H8 Z" fill="#afb1b3"/>
<circle cx="12.2" cy="337.4" r="2.8" fill="none" stroke="#8e979c" stroke-width="1.4"/><circle cx="18.6" cy="337.4" r="2.8" fill="none" stroke="#8e979c" stroke-width="1.4"/>
<path d="M6.9,345 Q6.9,341.4 10,341.3 H14.5 V349 Q7.5,348.6 6.9,345 Z" fill="#8e979c"/>
<circle cx="19" cy="345.6" r="5.4" fill="#3c3f41"/><circle cx="19" cy="345.6" r="4.4" fill="#afb1b3"/>
<text x="19" y="348.6" font-family="Liberation Sans" font-size="7.5" font-weight="bold" fill="#3c3f41" text-anchor="middle">?</text>
<rect x="15.5" y="822" width="5.5" height="5.5" fill="#afb1b3"/><rect x="9" y="828.5" width="5.5" height="5.5" fill="#afb1b3"/><rect x="15.5" y="828.5" width="5.5" height="5.5" fill="#afb1b3"/>
<path d="M9,891 H21 V905 L15,900 L9,905 Z" fill="#afb1b3"/>
<path d="M45.8,928.5 V939.5 M52.3,930.5 Q52.3,935.8 45.8,937.6" fill="none" stroke="#afb1b3" stroke-width="2"/><circle cx="45.8" cy="928.4" r="2.1" fill="#afb1b3"/><circle cx="45.8" cy="939.5" r="2.1" fill="#afb1b3"/><circle cx="52.3" cy="929.9" r="2.1" fill="#afb1b3"/>
<polygon points="139.3,927 139.3,939 149.6,933" fill="#afb1b3"/><circle cx="151.2" cy="938.6" r="2.4" fill="#3c3f41"/><circle cx="151.2" cy="938.6" r="2" fill="#10d010"/>
<path d="M211,928.3 H213 M214.3,928.3 H223.5 M211,932.6 H213 M214.3,932.6 H223.5 M211,936.8 H213 M214.3,936.8 H223.5" stroke="#afb1b3" stroke-width="1.8"/>
<circle cx="299.3" cy="932.4" r="6.5" fill="#afb1b3"/><rect x="298.3" y="928.3" width="2" height="5" fill="#3c3f41"/><rect x="298.3" y="934.6" width="2" height="1.9" fill="#3c3f41"/>
<rect x="362" y="926" width="13.8" height="13" fill="#afb1b3"/><path d="M364,928.8 L367.5,931.5 L364,934.2 M368,935.8 H372.5" fill="none" stroke="#3c3f41" stroke-width="1.1"/>
<path d="M434.6,928.5 H446.2 M434.6,932.7 H446.2 M434.6,936.9 H446.2" stroke="#afb1b3" stroke-width="2.2"/>
<polygon points="526.4,925.5 534,929.6 526.4,933.6 518.8,929.6" fill="#afb1b3"/><path d="M518.8,932.8 L526.4,936.8 L534,932.8 M518.8,936 L526.4,940 L534,936" fill="none" stroke="#afb1b3" stroke-width="1.4"/>
<polygon points="655.8,926.4 664.2,926.4 668,933.2 664.2,940.2 655.8,940.2 652,933.2" fill="#afb1b3"/><polygon points="658.2,929.4 658.2,937.2 664.4,933.3" fill="#3c3f41"/>
<polygon points="733,926 740.8,939.8 725.2,939.8" fill="#afb1b3"/><polygon points="731.6,933.6 731.6,937 729,935.4" fill="#3c3f41"/>
<path d="M812,928.6 H825.8 M812,932.6 H821.5 M812,936.6 H823.8" stroke="#afb1b3" stroke-width="2.3"/>
<rect x="19.6" y="952.1" width="11.6" height="11" fill="none" stroke="#afb1b3" stroke-width="1.5"/><path d="M16.8,954.6 V965.6 H28.8" fill="none" stroke="#afb1b3" stroke-width="1.5"/>
<circle cx="1324" cy="955.3" r="2.7" fill="none" stroke="#afb1b3" stroke-width="1.4"/><circle cx="1330" cy="955.3" r="2.7" fill="none" stroke="#afb1b3" stroke-width="1.4"/>
<path d="M1318.2,962.6 Q1318.2,958.6 1321.4,958.4 H1332.6 Q1335.8,958.6 1335.8,962.6 Q1335.8,966.9 1327,967 Q1318.2,966.9 1318.2,962.6 Z" fill="#afb1b3"/>
<rect x="1321.5" y="958.9" width="10.8" height="5.6" rx="1.4" fill="#3c3f41"/><rect x="1324.4" y="960.2" width="1.6" height="2.9" fill="#afb1b3"/><rect x="1328.4" y="960.2" width="1.6" height="2.9" fill="#afb1b3"/>
<path d="M1591.5,952 V966 M1601,954 Q1601,960 1591.5,962" fill="none" stroke="#afb1b3" stroke-width="1.6"/><circle cx="1591.5" cy="952.8" r="1.7" fill="#afb1b3"/><circle cx="1591.5" cy="965.2" r="1.7" fill="#afb1b3"/><circle cx="1601" cy="953.6" r="1.7" fill="#afb1b3"/>
<rect x="1676.5" y="959" width="10" height="7" fill="#afb1b3"/><path d="M1678,959 V955.5 Q1678,952.5 1675,952.5 Q1672.5,952.5 1672.5,955.5 V957" fill="none" stroke="#afb1b3" stroke-width="1.6"/>
<circle cx="1711" cy="959.5" r="7.6" fill="#afb1b3"/><rect x="1709.9" y="954.5" width="2.3" height="6" fill="#3c3f41"/><rect x="1709.9" y="961.8" width="2.3" height="2.2" fill="#3c3f41"/>
</svg></body></html>
